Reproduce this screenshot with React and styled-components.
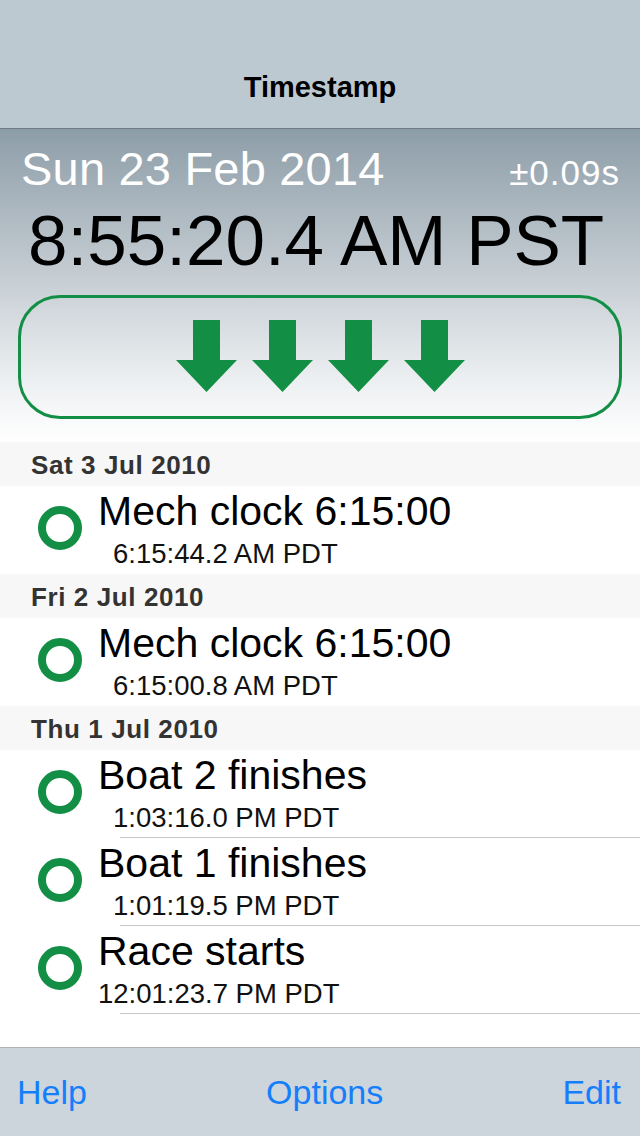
import React from "react"
import styled, { createGlobalStyle } from "styled-components"

const GlobalStyle = createGlobalStyle`
  html, body {
    margin: 0;
    padding: 0;
    background: #ffffff;
    font-family: "Liberation Sans", Arial, sans-serif;
  }
`

const sections = [
  {
    date: "Sat 3 Jul 2010",
    events: [{ title: "Mech clock 6:15:00", time: "6:15:44.2 AM PDT", indent: true }],
  },
  {
    date: "Fri 2 Jul 2010",
    events: [{ title: "Mech clock 6:15:00", time: "6:15:00.8 AM PDT", indent: true }],
  },
  {
    date: "Thu 1 Jul 2010",
    events: [
      { title: "Boat 2 finishes", time: "1:03:16.0 PM PDT", indent: true },
      { title: "Boat 1 finishes", time: "1:01:19.5 PM PDT", indent: true },
      { title: "Race starts", time: "12:01:23.7 PM PDT" },
    ],
  },
]

const DownArrow = () => (
  <svg width="61" height="72" viewBox="0 0 61 72">
    <path d="M17 0 H44 V40 H61 L30.5 72 L0 40 H17 Z" fill="#138f45" />
  </svg>
)

const App = () => {
  return (
    <Page>
      <GlobalStyle />
      <NavBar>
        <NavTitle>Timestamp</NavTitle>
      </NavBar>
      <ClockPanel>
        <DateRow>
          <DateText>Sun 23 Feb 2014</DateText>
          <Accuracy>±0.09s</Accuracy>
        </DateRow>
        <TimeText>8:55:20.4 AM PST</TimeText>
        <StampButton>
          <DownArrow />
          <DownArrow />
          <DownArrow />
          <DownArrow />
        </StampButton>
      </ClockPanel>
      <List>
        {sections.map((section, si) => {
          const lastSection = si === sections.length - 1
          return (
            <section key={section.date}>
              <SectionHeader>{section.date}</SectionHeader>
              {section.events.map((ev, ei) => {
                const last = ei === section.events.length - 1
                return (
                  <Row key={ev.time}>
                    <RowBody>
                      <Ring />
                      <RowText>
                        <RowTitle>{ev.title}</RowTitle>
                        <RowTime $indent={ev.indent}>{ev.time}</RowTime>
                      </RowText>
                    </RowBody>
                    <Separator $hidden={last && !lastSection} />
                  </Row>
                )
              })}
            </section>
          )
        })}
      </List>
      <Toolbar>
        <ToolButton>Help</ToolButton>
        <ToolButton>Options</ToolButton>
        <ToolButton>Edit</ToolButton>
      </Toolbar>
    </Page>
  )
}

export default App

const Page = styled.div`
  height: 1136px;
  display: flex;
  flex-direction: column;
  overflow: hidden;
`

const NavBar = styled.header`
  height: 84px;
  padding-top: 44px;
  background: #bdc9d1;
  border-bottom: 1px solid #6f7a82;
  display: flex;
  align-items: center;
  justify-content: center;
  flex-shrink: 0;
`

const NavTitle = styled.h1`
  margin: 0;
  font-size: 29px;
  font-weight: 700;
  color: #000;
  padding-top: 2px;
`

const ClockPanel = styled.div`
  height: 313px;
  box-sizing: border-box;
  padding: 13px 18px 0 18px;
  background: linear-gradient(180deg, #8d9da8 0%, #c3cbd1 45%, #eceff1 80%, #ffffff 100%);
  flex-shrink: 0;
`

const DateRow = styled.div`
  display: flex;
  justify-content: space-between;
  align-items: baseline;
  padding: 0 2px 0 3px;
  height: 54px;
`

const DateText = styled.div`
  font-size: 47px;
  line-height: 54px;
  color: #ffffff;
  letter-spacing: 0.2px;
`

const Accuracy = styled.div`
  font-size: 35px;
  line-height: 54px;
  color: #ffffff;
  letter-spacing: 1px;
`

const TimeText = styled.div`
  margin-top: 7px;
  font-size: 71px;
  line-height: 76px;
  color: #000;
  padding-left: 10px;
  white-space: nowrap;
`

const StampButton = styled.div`
  margin-top: 16px;
  height: 124px;
  box-sizing: border-box;
  border: 3px solid #138f45;
  border-radius: 42px;
  display: flex;
  align-items: center;
  justify-content: center;
  gap: 15px;
  padding-bottom: 2px;
`

const List = styled.main`
  flex: 1;
  background: #ffffff;
`

const SectionHeader = styled.div`
  height: 44px;
  box-sizing: border-box;
  padding-left: 31px;
  background: #f7f7f7;
  font-size: 26px;
  font-weight: 700;
  letter-spacing: 0.6px;
  color: #333333;
  display: flex;
  align-items: center;
  padding-top: 2px;
`

const Row = styled.div`
  background: #ffffff;
`

const RowBody = styled.div`
  height: 87px;
  box-sizing: border-box;
  display: flex;
  align-items: flex-start;
  padding-left: 38px;
`

const Ring = styled.div`
  width: 44px;
  height: 44px;
  box-sizing: border-box;
  border: 8.5px solid #138f45;
  border-radius: 50%;
  margin-top: 20px;
  flex-shrink: 0;
`

const RowText = styled.div`
  margin-left: 16px;
  padding-top: 3px;
  display: flex;
  flex-direction: column;
`

const RowTitle = styled.div`
  font-size: 41px;
  line-height: 44px;
  color: #000;
  white-space: nowrap;
`

const RowTime = styled.div`
  margin-top: 5px;
  font-size: 27.5px;
  line-height: 32px;
  color: #111;
  padding-left: ${(p) => (p.$indent ? "15px" : "0")};
  white-space: nowrap;
`

const Separator = styled.div`
  height: 1px;
  margin-left: 120px;
  background: ${(p) => (p.$hidden ? "transparent" : "#c8c7cc")};
`

const Toolbar = styled.footer`
  height: 88px;
  flex-shrink: 0;
  background: #ccd5db;
  border-top: 1px solid #b2b2b2;
  display: flex;
  align-items: center;
  justify-content: space-between;
  padding: 0 19px 0 17px;
`

const ToolButton = styled.button`
  border: none;
  background: none;
  padding: 0;
  font-family: "Liberation Sans", Arial, sans-serif;
  font-size: 34px;
  color: #157efb;
`
